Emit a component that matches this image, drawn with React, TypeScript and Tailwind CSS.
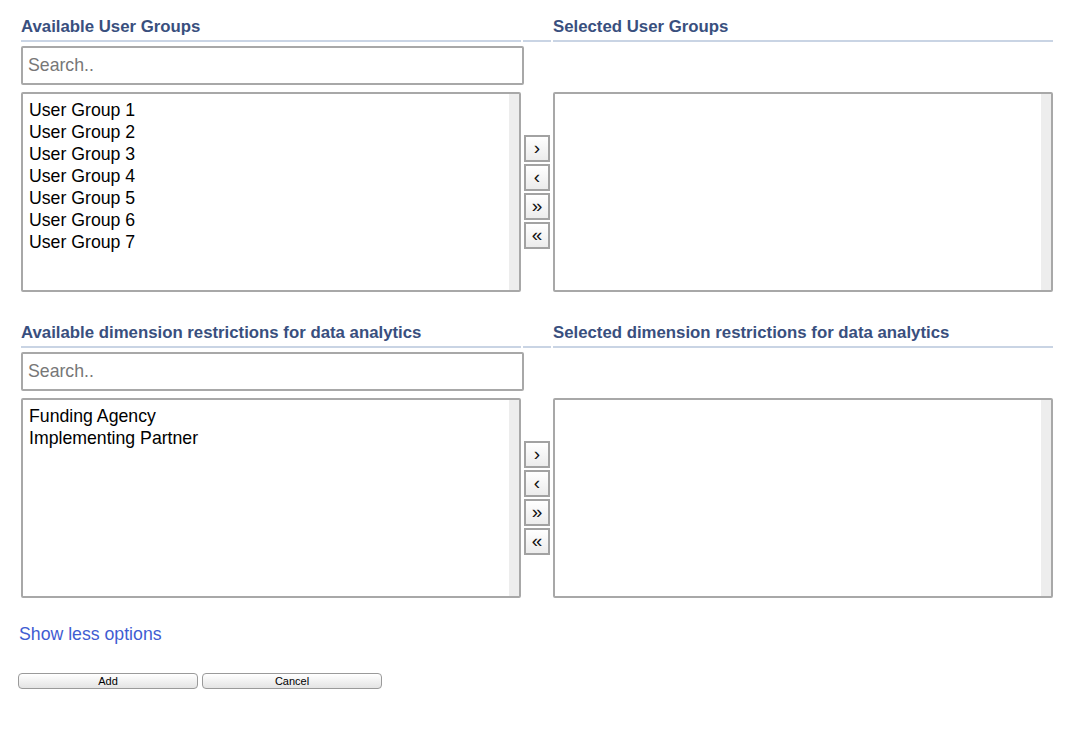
import React from 'react'

const ARROWS = ['›', '‹', '»', '«']

function ListBox({ items }: { items: string[] }) {
  return (
    <div className="flex h-[200px] w-[500px] rounded-[2px] border-2 border-[#a8a8a8] bg-white">
      <div className="flex-1 px-[6px] pt-[5px]">
        {items.map((it) => (
          <div key={it} className="text-[17.7px] leading-[22px] text-black">
            {it}
          </div>
        ))}
      </div>
      <div className="w-[10px] bg-[#ededed]" />
    </div>
  )
}

function ArrowButtons() {
  return (
    <div className="flex h-full flex-col items-center justify-center gap-[2px]">
      {ARROWS.map((a) => (
        <div
          key={a}
          className="flex h-[27px] w-[26px] items-center justify-center border-2 border-[#a2a2a2] bg-gradient-to-b from-white to-[#ececec] pb-[2px] text-[19px] leading-none text-[#111]"
        >
          {a}
        </div>
      ))}
    </div>
  )
}

function Section({ left, right, items }: { left: string; right: string; items: string[] }) {
  return (
    <div className="grid grid-cols-[500px_32px_500px]">
      {/* headings */}
      <div className="border-b-2 border-[#c9d4e4] pb-[2px] text-[16.8px] font-bold leading-[22px] text-[#394f7e]">
        {left}
      </div>
      <div className="mx-[2px] border-b-2 border-[#c9d4e4]" />
      <div className="border-b-2 border-[#c9d4e4] pb-[2px] text-[16.8px] font-bold leading-[22px] text-[#394f7e]">
        {right}
      </div>

      {/* search */}
      <div className="pt-[4px]">
        <input
          placeholder="Search.."
          className="h-[39px] w-[503px] rounded-[2px] border-2 border-[#a8a8a8] px-[5px] text-[17.7px] text-black outline-none placeholder:text-[#777]"
        />
      </div>
      <div />
      <div />

      {/* lists */}
      <div className="pt-[7px]">
        <ListBox items={items} />
      </div>
      <div className="pt-[7px]">
        <ArrowButtons />
      </div>
      <div className="pt-[7px]">
        <ListBox items={[]} />
      </div>
    </div>
  )
}

export default function App() {
  return (
    <div
      className="min-h-[732px] bg-white pl-[21px] pt-[16px]"
      style={{ fontFamily: '"Liberation Sans", Arial, sans-serif' }}
    >
      <Section
        left="Available User Groups"
        right="Selected User Groups"
        items={['User Group 1', 'User Group 2', 'User Group 3', 'User Group 4', 'User Group 5', 'User Group 6', 'User Group 7']}
      />
      <div className="mt-[30px]">
        <Section
          left="Available dimension restrictions for data analytics"
          right="Selected dimension restrictions for data analytics"
          items={['Funding Agency', 'Implementing Partner']}
        />
      </div>

      <div className="-ml-[2px] mt-[25px] text-[17.7px] leading-[22px] text-[#3f5dd2]">
        Show less options
      </div>

      <div className="-ml-[3px] mt-[28px] flex gap-[4px]">
        <button className="h-[16px] w-[180px] rounded-[4px] border border-[#9a9a9a] bg-gradient-to-b from-white to-[#e4e4e4] text-[11px] leading-none text-black">
          Add
        </button>
        <button className="h-[16px] w-[180px] rounded-[4px] border border-[#9a9a9a] bg-gradient-to-b from-white to-[#e4e4e4] text-[11px] leading-none text-black">
          Cancel
        </button>
      </div>
    </div>
  )
}
